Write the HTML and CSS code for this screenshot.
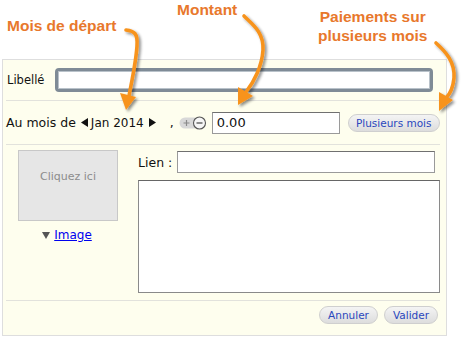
FILE: index.html
```html
<!DOCTYPE html>
<html lang="fr">
<head>
<meta charset="utf-8">
<title>Paiement</title>
<link rel="stylesheet" href="styles.css">
</head>
<body>
<div class="stage">
  <div class="panel">
    <div class="row row-title">
      <span class="lbl">Libellé</span>
      <input class="field field-title" type="text">
    </div>
    <div class="row row-month">
      <span class="txt">Au mois de</span>
      <svg class="tri tri-left" width="8" height="9" viewBox="0 0 8 9"><polygon points="0,4.5 7,0 7,9" fill="#111"/></svg>
      <span class="txt month">Jan 2014</span>
      <svg class="tri tri-right" width="8" height="9" viewBox="0 0 8 9"><polygon points="8,4.5 1,0 1,9" fill="#111"/></svg>
      <span class="txt comma">,</span>
      <svg class="pm" width="28" height="14" viewBox="0 0 28 14">
        <rect x="0.5" y="1.5" width="20" height="11" rx="5.5" fill="#d8d8d8"/>
        <path d="M4.5 7h6M7.5 4v6" stroke="#8a8a8a" stroke-width="1.2" fill="none"/>
        <circle cx="20.5" cy="7" r="6" fill="#f6f6f6" stroke="#555" stroke-width="1.1"/>
        <path d="M17.5 7h6" stroke="#444" stroke-width="1.2"/>
      </svg>
      <input class="field field-amount" type="text" value="0.00">
      <button class="btn btn-multi" type="button">Plusieurs mois</button>
    </div>
    <div class="row row-media">
      <div class="media-col">
        <div class="img-box">Cliquez ici</div>
        <div class="img-link">
          <svg width="8" height="7" viewBox="0 0 8 7"><polygon points="0,0 8,0 4,7" fill="#555"/></svg>
          <a href="#">Image</a>
        </div>
      </div>
      <div class="link-col">
        <div class="link-line">
          <span class="lbl">Lien :</span>
          <input class="field field-link" type="text">
        </div>
        <textarea class="area"></textarea>
      </div>
    </div>
    <div class="row row-actions">
      <button class="btn" type="button">Annuler</button>
      <button class="btn" type="button">Valider</button>
    </div>
  </div>

  <div class="note note-month">Mois de départ</div>
  <div class="note note-amount">Montant</div>
  <div class="note note-multi">Paiements sur<br>plusieurs mois</div>

  <svg class="arrows" width="468" height="337" viewBox="0 0 468 337">
    <defs>
      <filter id="sh" x="-50%" y="-50%" width="200%" height="200%">
        <feGaussianBlur in="SourceAlpha" stdDeviation="1.6"/>
        <feOffset dx="2" dy="2" result="b"/>
        <feComponentTransfer><feFuncA type="linear" slope="0.45"/></feComponentTransfer>
        <feMerge><feMergeNode/><feMergeNode in="SourceGraphic"/></feMerge>
      </filter>
    </defs>
    <g filter="url(#sh)" fill="#f7931e" stroke="#f7931e">
      <path d="M126 30 C 134 31, 138 33, 137 46 C 136 62, 132 80, 129 96" fill="none" stroke-width="3.6" stroke-linecap="round"/>
      <polygon points="120,93 136,97 126,110" stroke="none"/>
      <path d="M244 16 C 252 24, 264 32, 263 50 C 262 66, 254 82, 246 92" fill="none" stroke-width="3.6" stroke-linecap="round"/>
      <polygon points="238,87 253,96 238,105" stroke="none"/>
      <path d="M436 43 C 446 52, 455 62, 454 78 C 453 88, 450 94, 446 98" fill="none" stroke-width="3.6" stroke-linecap="round"/>
      <polygon points="439,92 453,100 439,111" stroke="none"/>
    </g>
  </svg>
</div>
</body>
</html>
```

FILE: styles.css
```css
html, body {
  margin: 0;
  padding: 0;
  background: #fff;
}
.stage {
  position: relative;
  width: 468px;
  height: 337px;
  overflow: hidden;
  font-family: "DejaVu Sans", "Lucida Grande", sans-serif;
  font-size: 12px;
  color: #111;
}
.panel {
  margin: 59px 0 0 2px;
  width: 443px;
  height: 275px;
  border: 1px solid #dedede;
  background: #fefeee;
  display: flex;
  flex-direction: column;
}
.row {
  margin: 0 6px 0 3px;
  border-bottom: 1px solid #e2e2dc;
  display: flex;
  align-items: center;
}
.row-title {
  height: 40px;
  padding-left: 1px;
}
.row-title .lbl {
  font-size: 11.5px;
  width: 48px;
}
.field {
  box-sizing: border-box;
  background: #fff;
  border: 1px solid #9a9a9a;
  border-top-color: #707070;
  font-family: inherit;
  font-size: 13px;
  padding: 0 4px;
  margin: 0;
  outline: none;
  color: #111;
}
.field-title {
  width: 378px;
  height: 24px;
  border: 3px solid #7f8b96;
  border-radius: 4px;
  box-shadow: inset 0 0 0 1px #b9c2ca;
}
.row-month {
  height: 43px;
  font-size: 12.5px;
}
.txt {
  white-space: nowrap;
}
.month {
  font-size: 12px;
}
.tri-left {
  margin-left: 5px;
  margin-right: 2px;
}
.tri-right {
  margin-left: 4px;
}
.comma {
  margin-left: 14px;
}
.pm {
  margin-left: 5px;
}
.field-amount {
  width: 128px;
  height: 22px;
  margin-left: 5px;
}
.btn {
  box-sizing: border-box;
  height: 18px;
  padding: 0 8px;
  border: 1px solid #cfcfcf;
  border-radius: 9px;
  background: linear-gradient(#f4f4f4, #dddddd);
  color: #2a47bd;
  font-family: "DejaVu Sans", sans-serif;
  font-size: 10.5px;
  line-height: 16px;
  cursor: pointer;
}
.btn-multi {
  margin-left: 8px;
  width: 92px;
  padding: 0;
}
.row-media {
  height: 155px;
  align-items: flex-start;
}
.media-col {
  width: 126px;
  display: flex;
  flex-direction: column;
  align-items: center;
  padding-top: 5px;
}
.img-box {
  box-sizing: border-box;
  width: 100px;
  height: 71px;
  background: #e6e6e6;
  border: 1px solid #c8c8c8;
  color: #8c8c8c;
  font-size: 11px;
  display: flex;
  justify-content: center;
  padding-top: 19px;
}
.img-link {
  margin-top: 7px;
  display: flex;
  align-items: center;
  gap: 4px;
  font-size: 12px;
  margin-right: 2px;
}
.img-link a {
  color: #0000ee;
}
.link-col {
  display: flex;
  flex-direction: column;
  padding-top: 6px;
  margin-left: 8px;
}
.link-line {
  display: flex;
  align-items: center;
}
.link-line .lbl {
  width: 39px;
  font-size: 12.5px;
}
.field-link {
  width: 258px;
  height: 22px;
}
.area {
  box-sizing: border-box;
  margin: 7px 0 0 0;
  width: 302px;
  height: 113px;
  border: 1px solid #8a8a8a;
  border-top-color: #666;
  background: #fff;
  resize: none;
  outline: none;
}
.row-actions {
  border-bottom: none;
  flex: 1;
  justify-content: flex-end;
  align-items: flex-start;
  padding-top: 5px;
  padding-right: 2px;
  gap: 6px;
}
.note {
  position: absolute;
  font-family: "Liberation Sans", Arial, sans-serif;
  font-weight: bold;
  color: #e8782c;
  font-size: 15.5px;
  line-height: 19px;
}
.note-month {
  left: 7px;
  top: 16px;
}
.note-amount {
  left: 177px;
  top: 0px;
}
.note-multi {
  left: 318px;
  top: 7px;
  text-align: center;
}
.arrows {
  position: absolute;
  left: 0;
  top: 0;
  pointer-events: none;
}
```
